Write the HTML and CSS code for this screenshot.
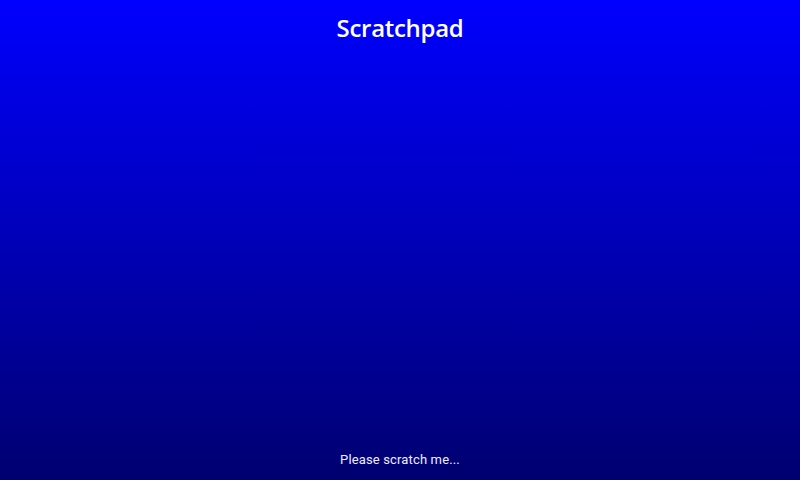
FILE: index.html
```html
<!DOCTYPE html>
<html>
<head>
<meta charset="utf-8">
<link rel="stylesheet" href="styles.css">
</head>
<body>
<div class="screen">
  <h1 class="title">Scratchpad</h1>
  <div class="hint">Please scratch me...</div>
</div>
</body>
</html>
```
FILE: styles.css
```css
html, body { margin: 0; padding: 0; }
.screen {
  width: 800px;
  height: 480px;
  background: linear-gradient(to bottom, #0000ff 0%, #000070 100%);
  display: flex;
  flex-direction: column;
  justify-content: space-between;
  align-items: center;
  color: #fff;
  overflow: hidden;
}
.title {
  margin: 0;
  padding-top: 11px;
  font-family: "Open Sans", sans-serif;
  font-weight: 600;
  font-size: 24px;
  line-height: 34px;
  letter-spacing: -0.3px;
}
.hint {
  font-family: Roboto, sans-serif;
  font-size: 13px;
  line-height: 16px;
  letter-spacing: 0.15px;
  color: #eeeeff;
  padding-bottom: 12px;
}
```
